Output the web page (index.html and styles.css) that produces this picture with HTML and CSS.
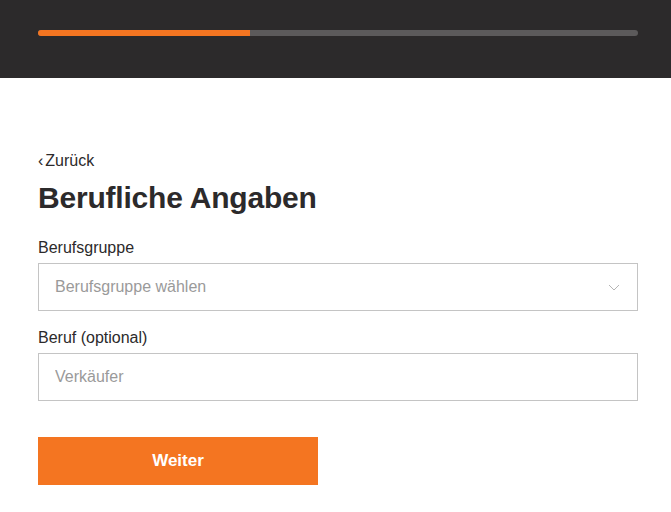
FILE: index.html
```html
<!DOCTYPE html>
<html lang="de">
<head>
    <meta charset="UTF-8">
    <meta name="viewport" content="width=device-width, initial-scale=1.0">
    <title>Berufliche Angaben</title>
    <link rel="stylesheet" href="styles.css">
</head>
<body>
    <header class="topbar">
        <div class="progress">
            <div class="progress-fill"></div>
        </div>
    </header>

    <main class="content">
        <a class="back-link" href="#"><span class="back-arrow">&lsaquo;</span>Zurück</a>
        <h1>Berufliche Angaben</h1>

        <label class="field-label" for="gruppe">Berufsgruppe</label>
        <div class="select" id="gruppe">
            <span class="placeholder">Berufsgruppe wählen</span>
            <svg class="chevron" width="12" height="7" viewBox="0 0 12 7">
                <path d="M1 1 L6 6 L11 1" fill="none" stroke="#b5b5b5" stroke-width="1"/>
            </svg>
        </div>

        <label class="field-label" for="beruf">Beruf (optional)</label>
        <input class="text-input" id="beruf" type="text" placeholder="Verkäufer">

        <button class="next-button">Weiter</button>
    </main>
</body>
</html>
```

FILE: styles.css
```css
body {
    margin: 0;
    font-family: "Liberation Sans", Arial, sans-serif;
    color: #2c2a2b;
    background-color: #fff;
}
.topbar {
    background-color: #2c2a2b;
    height: 78px;
    padding: 30px 33px 0 38px;
    box-sizing: border-box;
}
.progress {
    height: 6px;
    border-radius: 3px;
    background-color: #5c5a5b;
    overflow: hidden;
}
.progress-fill {
    width: 212px;
    height: 100%;
    background-color: #f47521;
}
.content {
    display: flex;
    flex-direction: column;
    align-items: flex-start;
    padding: 74px 33px 0 38px;
}
.back-link {
    font-size: 16px;
    color: #2c2a2b;
    text-decoration: none;
    line-height: 18px;
}
.back-arrow {
    margin-right: 2px;
}
h1 {
    font-size: 30px;
    font-weight: bold;
    letter-spacing: -0.2px;
    margin: 11px 0 24px;
    line-height: 34px;
}
.field-label {
    font-size: 16px;
    line-height: 18px;
    margin-bottom: 6px;
}
.select,
.text-input {
    width: 100%;
    height: 48px;
    box-sizing: border-box;
    border: 1px solid #c4c4c4;
    padding: 0 16px;
    font-family: inherit;
    font-size: 16px;
    color: #2c2a2b;
    margin-bottom: 18px;
}
.select {
    display: flex;
    align-items: center;
    justify-content: space-between;
}
.placeholder,
.text-input::placeholder {
    color: #9a9a9a;
}
.chevron {
    margin-right: 1px;
}
.text-input {
    outline: none;
}
.next-button {
    margin-top: 18px;
    width: 280px;
    height: 48px;
    border: none;
    background-color: #f47521;
    color: #fff;
    font-family: inherit;
    font-size: 17px;
    font-weight: bold;
    cursor: pointer;
}
```
